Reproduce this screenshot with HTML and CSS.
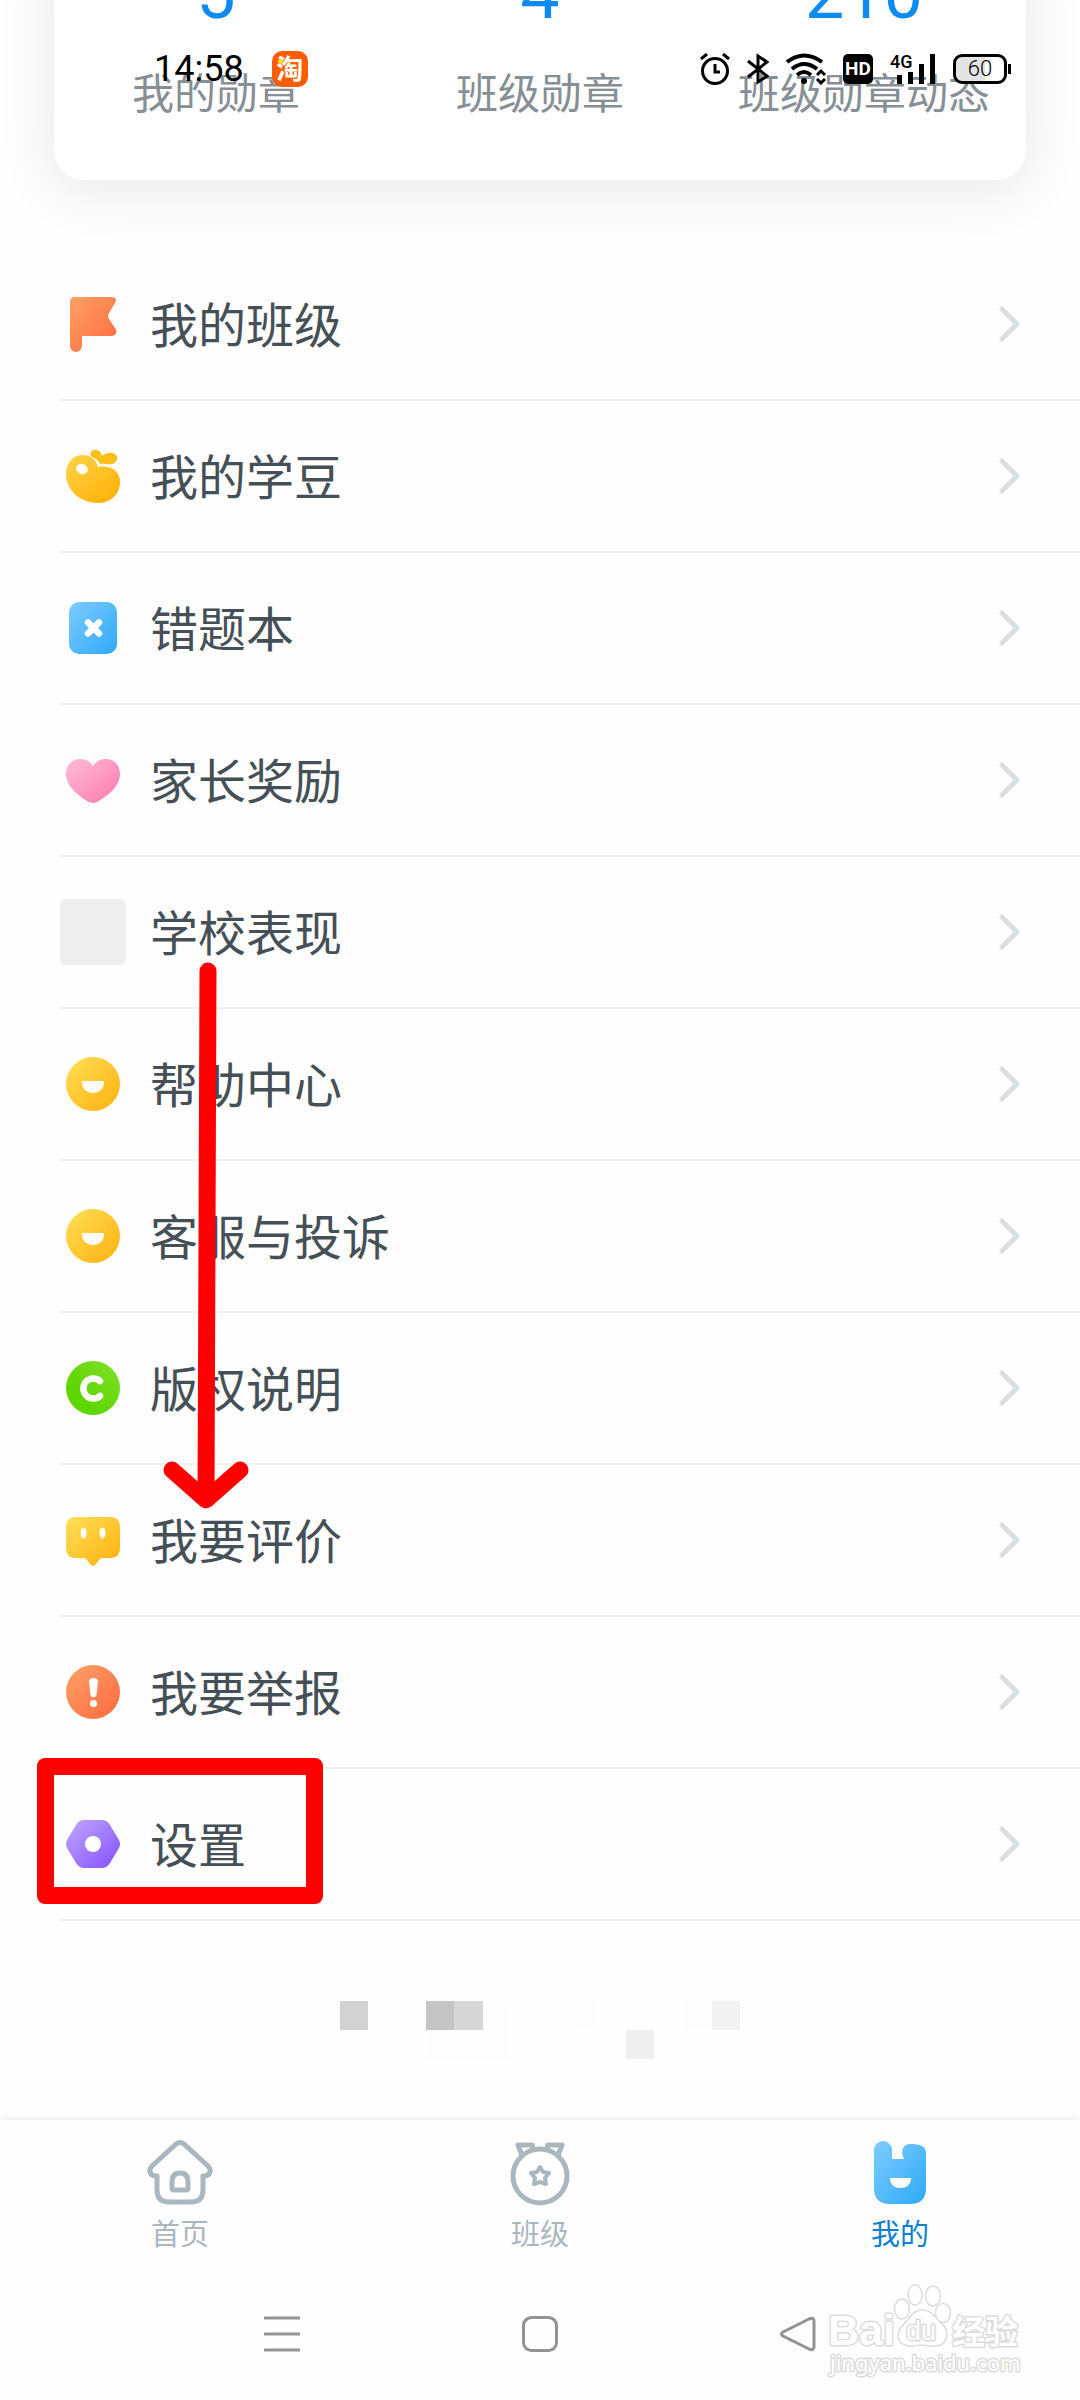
FILE: index.html
```html
<!DOCTYPE html>
<html lang="zh-CN">
<head>
<meta charset="utf-8">
<meta name="viewport" content="width=device-width">
<title>我的</title>
<link rel="stylesheet" href="styles.css">
</head>
<body>
<svg class="defs" width="0" height="0" aria-hidden="true">
  <defs>
    <linearGradient id="orange" x1="0" y1="0" x2="1" y2="1"><stop offset="0" stop-color="#ffa167"/><stop offset="1" stop-color="#ff6a3f"/></linearGradient>
    <linearGradient id="gold" x1="0" y1="0" x2="1" y2="1"><stop offset="0" stop-color="#ffd54a"/><stop offset="1" stop-color="#ffae00"/></linearGradient>
    <linearGradient id="yellow" x1="0" y1="0" x2="1" y2="1"><stop offset="0" stop-color="#ffe05a"/><stop offset="1" stop-color="#ffb00c"/></linearGradient>
    <linearGradient id="blue" x1="0" y1="0" x2="1" y2="1"><stop offset="0" stop-color="#7fccff"/><stop offset="1" stop-color="#2ea9f8"/></linearGradient>
    <linearGradient id="pink" x1="0" y1="0" x2="1" y2="1"><stop offset="0" stop-color="#ffbdd6"/><stop offset="1" stop-color="#ff78ab"/></linearGradient>
    <linearGradient id="green" x1="1" y1="0" x2="0" y2="1"><stop offset="0" stop-color="#80e02c"/><stop offset=".7" stop-color="#5ed600"/></linearGradient>
    <linearGradient id="purple" x1="0" y1="0" x2="1" y2="1"><stop offset="0" stop-color="#c1a8ff"/><stop offset="1" stop-color="#8450ff"/></linearGradient>
    <symbol id="chevron" viewBox="0 0 24 40"><path d="M4 5 19 20 4 35" fill="none" stroke="#d8dfe2" stroke-width="5" stroke-linecap="round" stroke-linejoin="round"/></symbol>
    <symbol id="smile" viewBox="0 0 66 66"><circle cx="33" cy="33" r="27" fill="url(#yellow)"/><path d="M23 30H43Q44 30 44 31C44 38 39 42 33 42S22 38 22 31Q22 30 23 30Z" fill="#fff"/></symbol>
  </defs>
</svg>

<header class="status">
  <span class="time">14:58</span>
  <span class="app-badge">淘</span>
  <div class="status-icons">
    <svg width="30" height="32" viewBox="0 0 30 32" fill="none" stroke="#000" stroke-width="3"><circle cx="15" cy="18" r="12.500"/><path d="M15 11v8h5M1 6l6-5M29 6l-6-5"/></svg>
    <svg width="22" height="32" viewBox="0 0 22 32" fill="none" stroke="#000" stroke-width="3"><path d="M1 8 20 23 11 29V3L20 9 1 24"/></svg>
    <svg width="40" height="32" viewBox="0 0 40 32" fill="none" stroke="#000" stroke-width="4"><path d="M1 9Q18-4 36 9M6 16Q18 6 31 16M11 22Q18 16 25 22"/><circle cx="18" cy="28" r="3" fill="#000" stroke="none"/><path d="M31 22 35 18 39 22M31 26 35 30 39 26" stroke-width="3"/></svg>
    <span class="hd">HD</span>
    <div class="signal"><span>4G</span><svg width="46" height="32" viewBox="0 0 46 32"><path d="M7 22h5v9H7zM18 19h5v12h-5zM29 11h5v20h-5zM40 1h5v30h-5z"/></svg></div>
    <div class="battery"><span>60</span></div>
  </div>
</header>

<main>
  <section class="stats">
    <div><strong>5</strong><span>我的勋章</span></div>
    <div><strong>4</strong><span>班级勋章</span></div>
    <div><strong>210</strong><span>班级勋章动态</span></div>
  </section>

  <div class="menu">
    <a href="#class"><svg class="icon" viewBox="0 0 66 66"><path d="M15 6H51C56 6 57 9 55 12L49 22Q47 25 49 28L55 37C58 41 56 45 51 45H22V55A6 6 0 0 1 10 55V11Q10 6 15 6Z" fill="url(#orange)"/></svg><span>我的班级</span><svg class="go"><use href="#chevron"/></svg></a>
    <a href="#beans"><svg class="icon" viewBox="0 0 66 66" fill="url(#gold)"><path d="M6 31C6 19 14 12 23 12C31 12 36 17 38 24C41 23 44 23 47 24C55 25 60 31 60 39C60 51 51 60 38 60C19 60 6 46 6 31Z"/><path d="M40 21C38 17 36 16 32 14C29 12 31 6 35 7C39 7 41 9 42 13C46 9 52 9 55 11C59 14 57 20 52 21C47 22 44 20 40 21Z" fill="#ffbf1a"/><ellipse cx="22" cy="26" rx="6" ry="5" transform="rotate(20 22 26)" fill="#fff"/></svg><span>我的学豆</span><svg class="go"><use href="#chevron"/></svg></a>
    <a href="#mistakes"><svg class="icon" viewBox="0 0 66 66"><rect x="9" y="7" width="48" height="52" rx="10" fill="url(#blue)"/><path d="M28 27.500 39 38.500M39 27.500 28 38.500" stroke="#fff" stroke-width="6.500" stroke-linecap="round"/></svg><span>错题本</span><svg class="go"><use href="#chevron"/></svg></a>
    <a href="#rewards"><svg class="icon" viewBox="0 0 66 66"><path d="M33 19C37 13 42 12 46 12C54 12 60 18 60 27C60 41 44 51 37 55Q33 57 29 55C22 51 6 41 6 27C6 18 12 12 20 12C24 12 29 13 33 19Z" fill="url(#pink)"/></svg><span>家长奖励</span><svg class="go"><use href="#chevron"/></svg></a>
    <a href="#school"><i class="icon blank"></i><span>学校表现</span><svg class="go"><use href="#chevron"/></svg></a>
    <a href="#help"><svg class="icon"><use href="#smile"/></svg><span>帮助中心</span><svg class="go"><use href="#chevron"/></svg></a>
    <a href="#support"><svg class="icon"><use href="#smile"/></svg><span>客服与投诉</span><svg class="go"><use href="#chevron"/></svg></a>
    <a href="#copyright"><svg class="icon" viewBox="0 0 66 66"><circle cx="33" cy="33" r="27" fill="url(#green)"/><path d="M40 26A10 10 0 1 0 40 41" fill="none" stroke="#fff" stroke-width="6.500" stroke-linecap="round"/></svg><span>版权说明</span><svg class="go"><use href="#chevron"/></svg></a>
    <a href="#rate"><svg class="icon" viewBox="0 0 66 66"><path d="M16 10H50Q60 10 60 20V41Q60 51 50 51H41L35 58Q33 60 31 58L25 51H16Q6 51 6 41V20Q6 10 16 10Z" fill="url(#yellow)"/><ellipse cx="23.500" cy="26" rx="3" ry="5.500" fill="#fff"/><ellipse cx="42.500" cy="26" rx="3" ry="5.500" fill="#fff"/></svg><span>我要评价</span><svg class="go"><use href="#chevron"/></svg></a>
    <a href="#report"><svg class="icon" viewBox="0 0 66 66"><circle cx="33" cy="33" r="27" fill="url(#orange)"/><path d="M29 22C29 18 38 18 38 22L36.500 36C36 39 31 39 30.500 36Z" fill="#fff"/><circle cx="33.500" cy="44.500" r="3.500" fill="#fff"/></svg><span>我要举报</span><svg class="go"><use href="#chevron"/></svg></a>
    <a href="#settings"><svg class="icon" viewBox="0 0 66 66"><path d="M24 9H42Q47 9 50 14L59 29Q61 33 59 37L50 52Q47 57 42 57H24Q19 57 16 52L7 37Q5 33 7 29L16 14Q19 9 24 9Z" fill="url(#purple)"/><circle cx="33" cy="33" r="8" fill="#fff"/></svg><span>设置</span><svg class="go"><use href="#chevron"/></svg></a>

    <svg class="arrow" width="88" height="552" viewBox="0 0 88 552" fill="none" stroke="#f00" stroke-width="17" stroke-linecap="round" stroke-linejoin="round" aria-hidden="true"><path d="M46 10 44 538M10 509 44 539 78 509"/></svg>
    <div class="highlight"></div>
  </div>

  <svg class="mosaic" width="400" height="58" viewBox="0 0 400 58" aria-hidden="true">
    <path fill="#d2d2d2" d="M0 0h28v29H0z"/><path fill="#c5c5c5" d="M86 0h28v29H86z"/><path fill="#d7d7d7" d="M114 0h29v29h-29z"/>
    <path fill="#fdfdfd" d="M143 0h27v58H86V29h57zM229 0h28v29h-28zM343 0h29v29h-29z"/><path fill="#efefef" d="M286 29h28v29h-28z"/><path fill="#f3f3f3" d="M372 0h28v29h-28z"/>
  </svg>
</main>

<nav class="tabs">
  <a href="#home"><svg width="68" height="68" viewBox="0 0 68 68" fill="none" stroke="#abb7be" stroke-width="5" stroke-linejoin="round" stroke-linecap="round"><path d="M30 6Q34 3 38 6L62 28C66 32 64 38 58 38H57V52Q57 64 45 64H23Q11 64 11 52V38H10C4 38 2 32 6 28Z"/><path d="M26 44Q26 35 34 35T42 44V50Q42 52 40 52H28Q26 52 26 50Z"/></svg><span>首页</span></a>
  <a href="#classes"><svg width="68" height="68" viewBox="0 0 68 68" fill="none" stroke="#abb7be" stroke-width="5" stroke-linejoin="round"><circle cx="34" cy="38" r="27"/><path d="M16 17 12 7H26Q28 10 25 12M52 17 56 7H42Q40 10 43 12"/><path d="M34 29 37 34 43 35 39 40 40 46 34 44 28 46 29 40 25 35 31 34Z" stroke-width="4"/></svg><span>班级</span></a>
  <a href="#me" class="active"><svg width="68" height="68" viewBox="0 0 68 68"><path d="M8 12A9 9 0 0 1 26 12V21H38C34 13 37 6 44 6C54 6 60 8 60 15V50Q60 66 44 66H24Q8 66 8 50Z" fill="url(#blue)"/><path d="M24 40H45C45 47 40 50 34.500 50S24 47 24 40Z" fill="#fff"/></svg><span>我的</span></a>
</nav>

<footer class="system">
  <button aria-label="菜单"><svg width="36" height="36" viewBox="0 0 36 36"><path d="M1 2H35M1 18H35M1 34H35" fill="none" stroke="#929292" stroke-width="3" stroke-linecap="round"/></svg></button>
  <button aria-label="主屏幕"><svg width="36" height="36" viewBox="0 0 36 36"><rect x="1.500" y="1.500" width="33" height="33" rx="8" fill="none" stroke="#929292" stroke-width="3"/></svg></button>
  <button aria-label="返回"><svg width="36" height="36" viewBox="0 0 36 36"><path d="M3 16 29 3Q34 1 34 5V31Q34 35 29 33L3 20Q0 18 3 16Z" fill="none" stroke="#929292" stroke-width="3"/></svg></button>
  <svg class="watermark" width="204" height="100" viewBox="0 0 204 100">
    <g class="mark"><text class="bai" x="4" y="63">Bai</text><text class="cn" x="128" y="62">经验</text><text class="url" x="6" y="89">jingyan.baidu.com</text></g>
    <g fill="#fff" stroke="#dcdcdc" stroke-width="1.500"><ellipse cx="78" cy="27" rx="7.500" ry="10"/><ellipse cx="91" cy="13" rx="7" ry="10"/><ellipse cx="109" cy="14" rx="7.500" ry="10"/><ellipse cx="119" cy="31" rx="7.500" ry="9.500"/><path d="M98 28C109 28 111 36 118 42C127 50 123 64 111 64C105 65 102 63 98 63S90 65 85 64C73 63 71 51 79 43C86 37 88 28 98 28Z"/></g>
    <text class="mark du" x="82" y="58">du</text>
  </svg>
</footer>
</body>
</html>
```
FILE: styles.css
```css
* { box-sizing: border-box; }

body {
  margin: 0;
  min-height: 100vh;
  display: flex;
  flex-direction: column;
  position: relative;
  overflow-x: hidden;
  background: #fefefe;
  color: #454f56;
  font-family: "Noto Sans CJK SC", sans-serif;
}

a { color: inherit; text-decoration: none; }
svg { display: block; flex: none; }
.defs { position: absolute; }

/* Status bar, drawn over the scrolled page */
.status {
  position: absolute;
  z-index: 2;
  top: 48px;
  left: 0;
  right: 0;
  height: 42px;
  padding: 0 68px 0 154px;
  display: flex;
  align-items: center;
  color: #000;
}
.time { font-family: Roboto, sans-serif; font-size: 36px; line-height: 42px; }
.app-badge {
  position: relative;
  width: 36px;
  height: 36px;
  margin-left: 28px;
  border-radius: 10px;
  background: #ff5c00;
  color: #fff;
  font-size: 27px;
  font-weight: 700;
  line-height: 34px;
  text-align: center;
}
.app-badge::after {
  content: "";
  position: absolute;
  left: 6px;
  top: 8px;
  width: 5px;
  height: 5px;
  border-radius: 50%;
  background: #ffe600;
}
.status-icons {
  margin-left: auto;
  display: flex;
  align-items: center;
  gap: 17px;
}
.hd {
  width: 30px;
  height: 30px;
  border-radius: 5px;
  background: #000;
  color: #fff;
  font: 700 19px/30px Roboto, sans-serif;
  text-align: center;
}
.signal { position: relative; }
.signal span {
  position: absolute;
  left: 0;
  top: 0;
  font: 500 18px/18px Roboto, sans-serif;
}
.battery {
  position: relative;
  width: 54px;
  height: 30px;
  margin-right: 5px;
  border: 3px solid #000;
  border-radius: 9px;
  background: linear-gradient(90deg, #e4e4e4 60%, #fff 60%);
  font: 300 22px/24px Roboto, sans-serif;
  text-align: center;
}
.battery::after {
  content: "";
  position: absolute;
  right: -7px;
  top: 7px;
  width: 3px;
  height: 10px;
  background: #000;
}

main { flex: 1; }

/* Badge counters; the card is scrolled partly off the top */
.stats {
  margin: -60px 54px 0;
  height: 240px;
  padding-top: 6px;
  border-radius: 0 0 30px 30px;
  background: #fff;
  box-shadow: 0 10px 60px rgba(0, 0, 0, .09);
  display: grid;
  grid-template-columns: repeat(3, 1fr);
  text-align: center;
}
.stats strong {
  display: block;
  color: #0c8bf0;
  font-family: Roboto, sans-serif;
  font-size: 70px;
  font-weight: 400;
  line-height: 96px;
}
.stats span {
  display: block;
  margin-top: 19px;
  color: #858f94;
  font-size: 42px;
  line-height: 60px;
}

.menu {
  position: relative;
  margin-top: 69px;
  padding-left: 60px;
}
.menu a {
  height: 152px;
  padding-right: 58px;
  border-bottom: 2px solid #f0f0f0;
  display: flex;
  align-items: center;
  font-size: 48px;
  line-height: 72px;
}
.menu a span { flex: 1; margin-left: 24px; padding-bottom: 4px; }
.icon { width: 66px; height: 66px; }
.blank { border-radius: 6px; background: #eee; }
.go { width: 24px; height: 40px; }

/* Red pen marks lying over the list */
.arrow { position: absolute; left: 162px; top: 712px; }
.highlight {
  position: absolute;
  left: 37px;
  top: 1509px;
  width: 286px;
  height: 146px;
  border: 17px solid #f00;
  border-radius: 8px;
}

.mosaic { margin: 80px auto 0; position: relative; }

.tabs {
  height: 148px;
  padding-top: 18px;
  background: #fefefe;
  box-shadow: 0 -1px 6px rgba(0, 0, 0, .08);
  display: grid;
  grid-template-columns: repeat(3, 1fr);
  color: #abb7be;
  font-size: 29px;
  line-height: 44px;
}
.tabs a {
  display: flex;
  flex-direction: column;
  align-items: center;
  gap: 4px;
}
.tabs .active { color: #0c7fd0; }

.system {
  position: relative;
  height: 132px;
  background: #fefefe;
  display: flex;
  justify-content: center;
  align-items: center;
  gap: 222px;
}
.system button {
  padding: 0;
  border: 0;
  background: none;
}

.watermark { position: absolute; right: 52px; top: 14px; }
.mark {
  fill: #fff;
  stroke: #dcdcdc;
  stroke-width: 3px;
  stroke-linejoin: round;
  paint-order: stroke;
  font-family: "Liberation Sans", "Noto Sans CJK SC", sans-serif;
  font-weight: 700;
}
.bai { font-size: 43px; }
.cn { font-size: 33px; }
.du { font-size: 27px; font-weight: 400; }
.url { font-family: "Noto Sans", sans-serif; font-size: 22px; font-weight: 400; }
```
